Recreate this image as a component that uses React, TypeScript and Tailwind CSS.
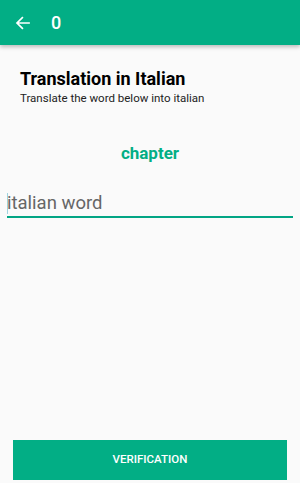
export default function App() {
  return (
    <div className="flex h-[483px] w-[300px] flex-col bg-[#fafafa]" style={{ fontFamily: 'Roboto, "Liberation Sans", sans-serif' }}>
      <div className="relative z-10 flex h-[45px] items-center bg-[#02ae85] shadow-[0_2px_4px_rgba(0,0,0,0.25)]">
        <svg className="ml-[15px] h-[16px] w-[16px]" viewBox="0 0 24 24" fill="none" stroke="white" strokeWidth="2.6" strokeLinecap="square">
          <path d="M21 12H4M11 4l-8 8 8 8" />
        </svg>
        <span className="ml-[20px] text-[18px] font-medium text-white">0</span>
      </div>
      <div className="flex flex-1 flex-col">
        <div className="mt-[22px] pl-[20px] text-[18px] font-bold leading-[24px] text-black">Translation in Italian</div>
        <div className="pl-[20px] text-[11.5px] leading-[14px] text-[#222]">Translate the word below into italian</div>
        <div className="mt-[37px] text-center text-[17px] font-bold leading-[22px] text-[#02ae85]">chapter</div>
        <div className="mx-[7px] mt-[27px] border-b-2 border-[#02a584] pb-[1px]">
          <div className="flex items-center text-[18.5px] leading-[24px] text-[#666]">
            <span className="mr-[-1px] inline-block h-[21px] w-[1px] bg-[#9fd3e0]" />
            italian word
          </div>
        </div>
        <div className="flex-1" />
        <div className="mx-[13px] mb-[3px] flex h-[40px] items-center justify-center bg-[#02ae85] text-[11.5px] font-medium text-white">
          VERIFICATION
        </div>
      </div>
    </div>
  )
}
